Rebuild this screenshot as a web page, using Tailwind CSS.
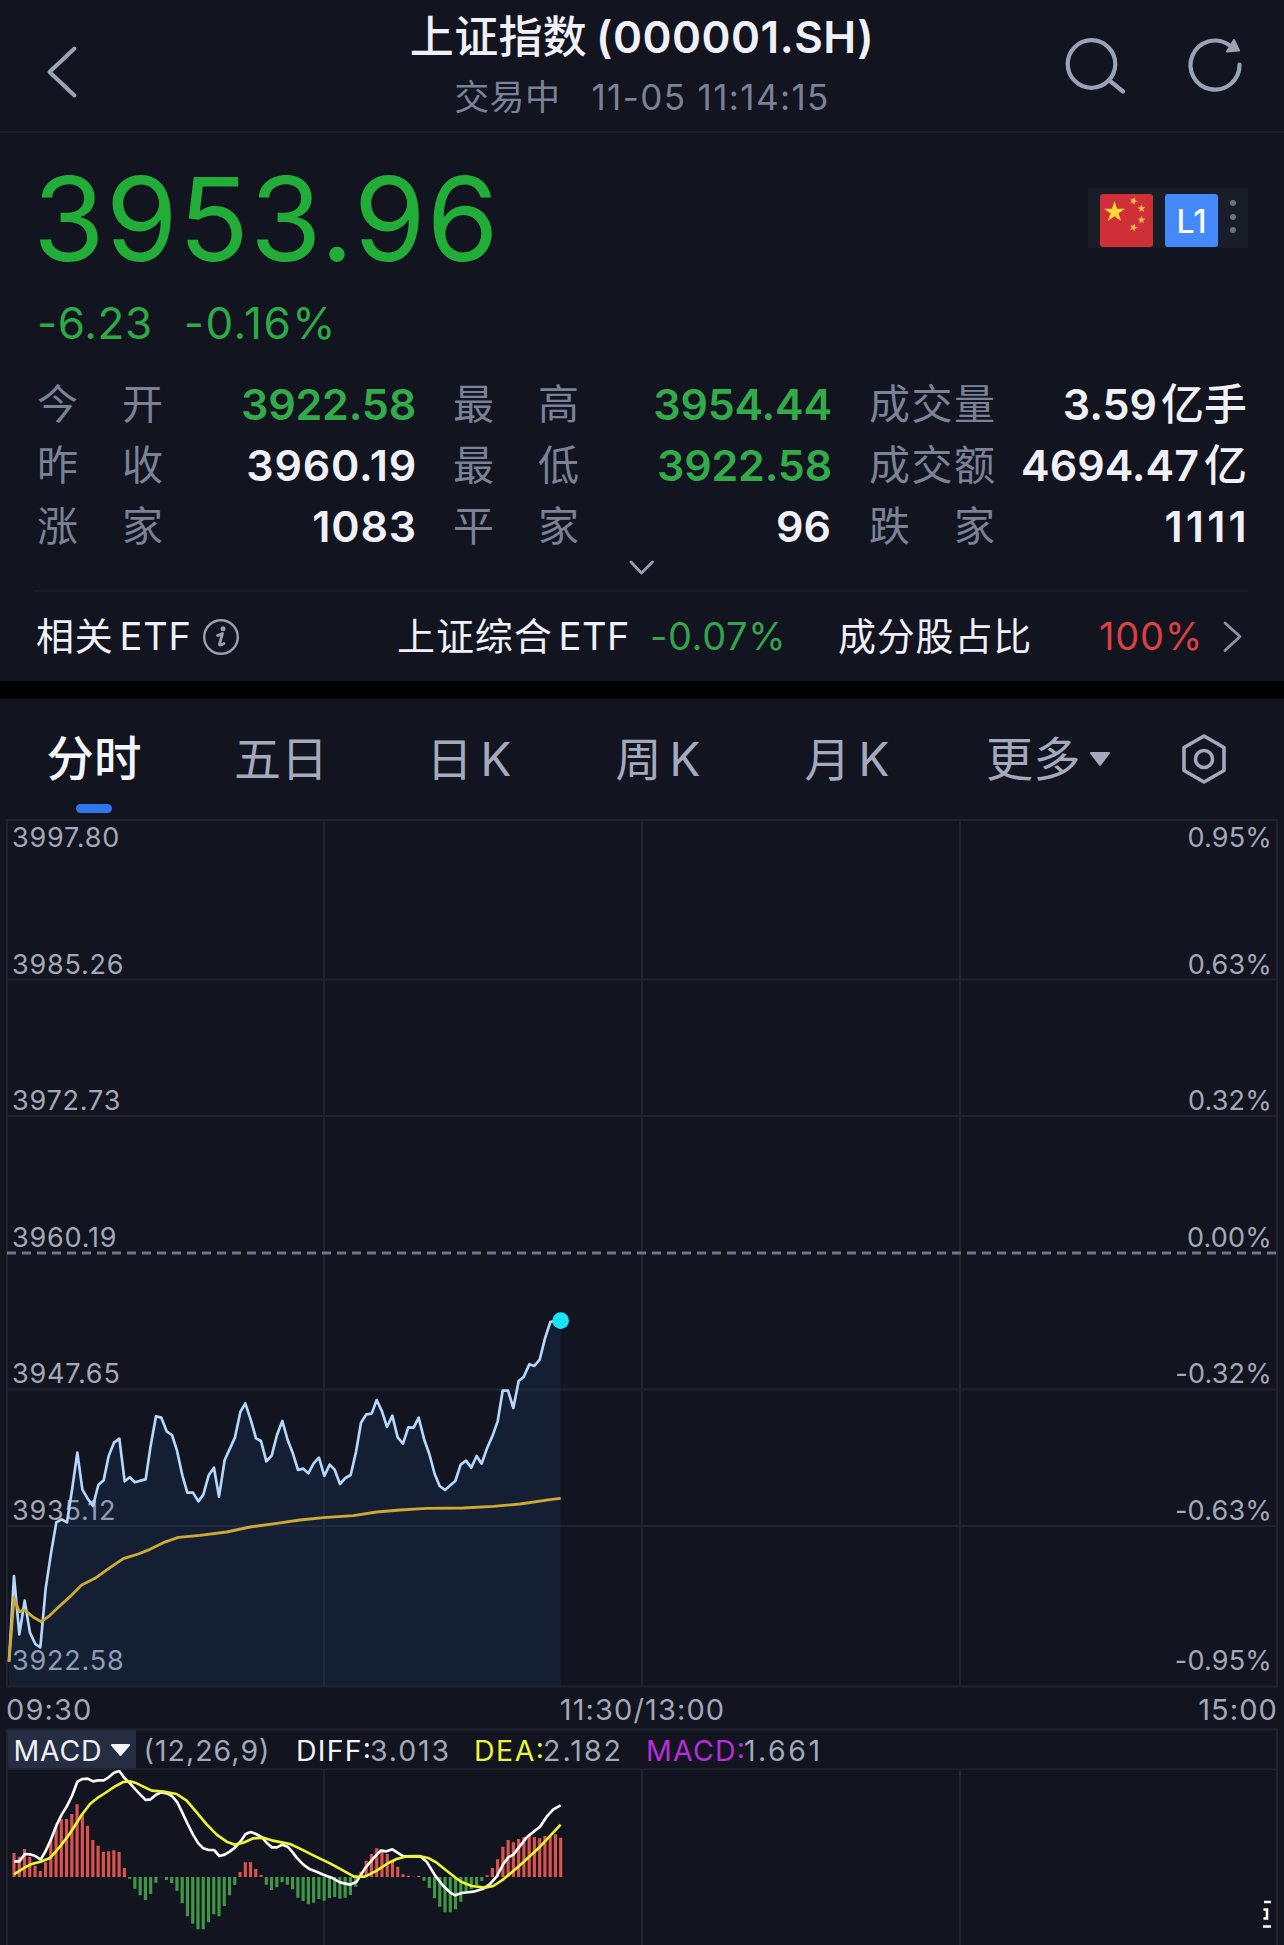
<!DOCTYPE html>
<html lang="zh-CN">
<head>
<meta charset="utf-8">
<title>上证指数 (000001.SH)</title>
<script src="https://cdn.jsdelivr.net/npm/@tailwindcss/browser@4"></script>
</head>
<body class="bg-[#12151f] font-['Inter','Noto_Sans_CJK_SC',sans-serif] text-[#f0f1f8] overflow-hidden">
<div class="w-[1284px] h-[1945px] flex flex-col overflow-hidden whitespace-nowrap">

  <header class="h-[133px] shrink-0 border-b-2 border-[#1a1d27] grid grid-cols-[1fr_auto_1fr]">
    <svg class="w-[100px] h-[131px]" viewBox="0 0 100 131" fill="none" stroke="#9ea3b8" stroke-width="4" stroke-linecap="round" stroke-linejoin="round"><path d="M74.500 48.500L49.500 72L74.500 95.500"/></svg>
    <div class="pt-[7px] flex flex-col items-center">
      <h1 class="h-[60px] leading-[60px] text-[44px] font-semibold flex gap-[9px]"><span class="font-medium tracking-[0.3px]">上证指数</span><span class="tracking-[0.5px]">(000001.SH)</span></h1>
      <p class="h-[61px] leading-[61px] text-[35px] text-[#7b8197] flex gap-[31px]"><span class="tracking-[0.4px]">交易中</span><span class="tracking-[1.4px]">11-05 11:14:15</span></p>
    </div>
    <svg class="w-[224px] h-[131px] justify-self-end" viewBox="1060 0 224 131" fill="none" stroke="#9ba1b6" stroke-width="4.200" stroke-linecap="round">
      <ellipse cx="1091.500" cy="64" rx="23.800" ry="23.800"/><path d="M1109.500 80.500L1123 91.500"/>
      <path d="M1239.500 64.500A24.500 24.500 0 1 1 1229 45"/><path fill="#9ba1b6" stroke-width="2" stroke-linejoin="round" d="M1234 40L1239 50.500L1227 51.500Z"/>
    </svg>
  </header>

  <section class="h-[548px] shrink-0 flex flex-col">
    <div class="mt-4 h-[140px] pl-[33px] pr-[36px] flex items-center justify-between">
      <span class="text-[116px] leading-[142px] tracking-[1px] text-[#22ac38]">3953.96</span>
      <div class="w-[160px] h-[60px] bg-[#191d28] flex items-start pt-[6px] pl-3 gap-3 relative -top-[1px]">
        <svg class="w-[53px] h-[53px]" viewBox="0 0 53 53"><rect width="53" height="53" rx="3" fill="#cf2f37"/>
          <path fill="#ffdc33" d="M14.500 7L17 14.700H25L18.600 19.300L21 27L14.500 22.300L8 27L10.400 19.300L4 14.700H12Z"/>
          <g fill="#f9b64a"><path transform="translate(33.500 7) rotate(20)" d="M0 -4.200L1.100 -1.400L4 -1.300L1.700 .600L2.500 3.400L0 1.800L-2.500 3.400L-1.700 .600L-4 -1.300L-1.100 -1.400Z"/><path transform="translate(41.500 14.500) rotate(-5)" d="M0 -4.200L1.100 -1.400L4 -1.300L1.700 .600L2.500 3.400L0 1.800L-2.500 3.400L-1.700 .600L-4 -1.300L-1.100 -1.400Z"/><path transform="translate(41.500 26)" d="M0 -4.200L1.100 -1.400L4 -1.300L1.700 .600L2.500 3.400L0 1.800L-2.500 3.400L-1.700 .600L-4 -1.300L-1.100 -1.400Z"/><path transform="translate(33.500 33.500) rotate(20)" d="M0 -4.200L1.100 -1.400L4 -1.300L1.700 .600L2.500 3.400L0 1.800L-2.500 3.400L-1.700 .600L-4 -1.300L-1.100 -1.400Z"/></g>
        </svg>
        <span class="w-[53px] h-[53px] rounded-[3px] bg-[#4489fa] text-white text-[32px] font-medium leading-[55px] text-center">L1</span>
        <svg class="w-[6px] h-[53px]" viewBox="0 0 6 53" fill="#6c7082"><circle cx="3" cy="9" r="3"/><circle cx="3" cy="23" r="3"/><circle cx="3" cy="36" r="3"/></svg>
      </div>
    </div>
    <div class="h-[68px] leading-[69px] pl-[37px] flex gap-[31px] text-[44px] text-[#2fa947]"><span class="tracking-[0.6px]">-6.23</span><span class="tracking-[1.5px]">-0.16%</span></div>

    <div class="mt-[17px] pl-[37px] pr-[37px] grid grid-cols-3 gap-x-[38px] text-[43px] leading-[61px] font-semibold">
      <div class="flex justify-between"><span class="w-[126px] flex justify-between text-[41px] font-normal text-[#7b8197]"><i class="not-italic">今</i><i class="not-italic">开</i></span><span class="text-[#34ab4b] -mr-px tracking-[-0.2px]">3922.58</span></div>
      <div class="flex justify-between"><span class="w-[126px] flex justify-between text-[41px] font-normal text-[#7b8197]"><i class="not-italic">最</i><i class="not-italic">高</i></span><span class="text-[#34ab4b] -mr-px tracking-[-0.2px]">3954.44</span></div>
      <div class="flex justify-between"><span class="w-[126px] flex justify-between text-[41px] font-normal text-[#7b8197]"><i class="not-italic">成</i><i class="not-italic">交</i><i class="not-italic">量</i></span><span class="flex gap-[4px]"><span>3.59</span><span class="font-medium">亿手</span></span></div>
      <div class="flex justify-between"><span class="w-[126px] flex justify-between text-[41px] font-normal text-[#7b8197]"><i class="not-italic">昨</i><i class="not-italic">收</i></span><span class="-mr-[2px] tracking-[0.8px]">3960.19</span></div>
      <div class="flex justify-between"><span class="w-[126px] flex justify-between text-[41px] font-normal text-[#7b8197]"><i class="not-italic">最</i><i class="not-italic">低</i></span><span class="text-[#34ab4b] -mr-px tracking-[-0.2px]">3922.58</span></div>
      <div class="flex justify-between"><span class="w-[126px] flex justify-between text-[41px] font-normal text-[#7b8197]"><i class="not-italic">成</i><i class="not-italic">交</i><i class="not-italic">额</i></span><span class="flex gap-[5px]"><span>4694.47</span><span class="font-medium">亿</span></span></div>
      <div class="flex justify-between"><span class="w-[126px] flex justify-between text-[41px] font-normal text-[#7b8197]"><i class="not-italic">涨</i><i class="not-italic">家</i></span><span class="-mr-[2px] tracking-[0.8px]">1083</span></div>
      <div class="flex justify-between"><span class="w-[126px] flex justify-between text-[41px] font-normal text-[#7b8197]"><i class="not-italic">平</i><i class="not-italic">家</i></span><span>96</span></div>
      <div class="flex justify-between"><span class="w-[126px] flex justify-between text-[41px] font-normal text-[#7b8197]"><i class="not-italic">跌</i><i class="not-italic">家</i></span><span class="-mr-[3px] tracking-[3.2px]">1111</span></div>
    </div>
    <svg class="w-[28px] h-[33px] mx-auto" viewBox="0 1 28 33" fill="none" stroke="#9a9fae" stroke-width="2.800" stroke-linecap="round" stroke-linejoin="round"><path d="M3 6L13.500 17L24.500 6"/></svg>
    <div class="h-[91px] ml-[34px] mr-[36px] border-t-2 border-[#1b1e29] leading-[89px] text-[38px] flex">
      <span class="w-[363px] pl-[2px] flex items-center"><span class="tracking-[0.8px]">相关</span><span class="ml-[6px] tracking-[0.8px]">ETF</span>
        <svg class="w-[38px] h-[38px] ml-[10px]" viewBox="0 0 38 38"><circle cx="19" cy="19" r="16.800" fill="none" stroke="#9a9ead" stroke-width="2.400"/><circle cx="21" cy="10.800" r="2.500" fill="#9a9ead"/><path d="M15.500 17.500Q18.500 16.800 20.500 15.500L17.500 26Q17 28.500 22 25.500" fill="none" stroke="#9a9ead" stroke-width="2.800" stroke-linecap="round" stroke-linejoin="round"/></svg>
      </span>
      <span class="w-[441px] flex"><span class="tracking-[0.9px]">上证综合</span><span class="ml-[6px] tracking-[0.5px]">ETF</span><span class="ml-[20px] tracking-[0.6px] text-[#35a24d]">-0.07%</span></span>
      <span class="tracking-[0.8px]">成分股占比</span>
      <span class="ml-auto tracking-[0.8px] text-[#dc4142]">100%</span>
      <svg class="w-[24px] h-[89px] ml-[18px] mr-[3px]" viewBox="0 0 24 89" fill="none" stroke="#8f94a5" stroke-width="2.800" stroke-linecap="round" stroke-linejoin="round"><path d="M4 31L19 44.500L4 58.500"/></svg>
    </div>
  </section>

  <div class="h-[18px] shrink-0 bg-black"></div>

  <nav class="h-[120px] shrink-0 relative flex items-center leading-[118px] text-[46px] text-[#a5a9bd]">
    <span class="w-[188px] text-center text-[47.500px] font-medium text-[#f4f5fb]">分时</span>
    <span class="w-[186px] text-center text-[47px]">五日</span>
    <span class="w-[190px] flex justify-center gap-[8px]"><i class="not-italic">日</i><i class="not-italic">K</i></span>
    <span class="w-[188px] flex justify-center gap-[8px]"><i class="not-italic">周</i><i class="not-italic">K</i></span>
    <span class="w-[190px] flex justify-center gap-[8px]"><i class="not-italic">月</i><i class="not-italic">K</i></span>
    <span class="ml-[44px] text-[47px] tracking-[0.5px]">更多</span>
    <svg class="w-[22px] h-[16px] ml-[8px]" viewBox="0 0 22 16"><path d="M2 2H20L11 14Z" fill="#a5a9bd" stroke="#a5a9bd" stroke-width="2" stroke-linejoin="round"/></svg>
    <svg class="w-[48px] h-[52px] ml-[69px]" viewBox="0 0 48 52" fill="none" stroke="#a3a8bd" stroke-width="3.600" stroke-linejoin="round"><path d="M24 3L44 14.500V37.500L24 49L4 37.500V14.500Z"/><circle cx="24" cy="26" r="8.500"/></svg>
    <span class="absolute left-[76px] top-[105px] w-[36px] h-[9px] rounded-full bg-[#2f75ec]"></span>
  </nav>

  <svg class="block w-[1284px] h-[951px] shrink-0" viewBox="0 819 1284 951" fill="#a3a7b8" font-size="27">
    <g stroke="#20232e" stroke-width="2" fill="none">
      <path d="M7 820H1277V1686.500H7ZM7 979.500H1277M7 1116H1277M7 1389.500H1277M7 1526H1277M324 820V1686M642 820V1686M960 820V1686"/>
      <path d="M7 1729.500H1277V1770M7 1729.500V1770"/>
    </g>
    <path d="M7 1253H1277" stroke="#70748a" stroke-width="2.800" stroke-dasharray="9 6"/>
    <g class="tracking-[0.8px]">
      <text x="12" y="847">3997.80</text><text x="12" y="974">3985.26</text><text x="12" y="1110">3972.73</text><text x="12" y="1247">3960.19</text><text x="12" y="1383">3947.65</text><text x="12" y="1520">3935.12</text><text x="12" y="1670">3922.58</text>
    </g>
    <g text-anchor="end" class="tracking-[0.2px]">
      <text x="1272" y="847">0.95%</text><text x="1272" y="974">0.63%</text><text x="1272" y="1110">0.32%</text><text x="1272" y="1247">0.00%</text><text x="1272" y="1383">-0.32%</text><text x="1272" y="1520">-0.63%</text><text x="1272" y="1670">-0.95%</text>
    </g>
    <g transform="translate(0 1300) scale(.333333)" fill="none" stroke-linejoin="round">
      <path id="area" fill="#275ca7" fill-opacity=".15"/>
      <polyline id="price" stroke="#b4d8fc" stroke-width="8" points="27,1085 42,828 58,1003 74,902 90,998 106,1032 121,1042 137,866 153,760 169,667 185,658 201,667 216,570 232,458 247,568 263,596 279,618 295,555 311,541 326,468 342,428 358,416 374,544 389,532 405,547 421,542 437,538 452,437 468,349 484,353 500,394 516,405 531,452 547,526 562,578 579,578 595,604 610,584 626,526 642,503 657,590 674,480 690,445 705,412 721,336 736,310 753,362 768,415 783,423 799,484 815,467 831,405 847,363 863,420 878,458 894,510 910,506 925,520 941,490 957,473 973,528 989,494 1004,509 1020,552 1036,534 1052,525 1068,456 1083,368 1099,343 1115,341 1130,300 1146,334 1161,381 1177,347 1193,412 1209,431 1225,382 1241,383 1256,353 1273,420 1288,462 1304,522 1319,558 1335,570 1351,556 1366,543 1382,494 1398,482 1414,503 1430,468 1445,491 1461,445 1477,409 1493,364 1508,272 1524,272 1540,324 1556,243 1571,231 1588,193 1603,198 1619,179 1635,115 1651,66 1667,62 1682,62"/>
      <polyline stroke="#cdaa35" stroke-width="8.500" points="27,1085 42,893 58,935 74,930 98,950 124,965 145,950 175,922 210,890 245,855 285,835 330,803 370,776 415,762 450,748 490,728 535,712 600,706 680,696 750,681 830,670 900,660 970,653 1060,647 1130,636 1200,630 1280,625 1390,624 1480,619 1560,612 1650,599 1682,595"/>
      <circle cx="1682" cy="62" r="25" fill="#19e3fb"/>
    </g>
    <g font-size="29" class="tracking-[1.1px]">
      <text x="6" y="1720">09:30</text><text x="642.500" y="1720" text-anchor="middle">11:30/13:00</text><text x="1278" y="1720" text-anchor="end">15:00</text>
    </g>
    <rect x="8" y="1730" width="128" height="40" fill="#242d41"/>
    <path d="M112 1745H129L120.500 1755Z" fill="#f4f5fb" stroke="#f4f5fb" stroke-width="2" stroke-linejoin="round"/>
    <g font-size="28.500">
      <text x="13.500" y="1761" fill="#eef0f8" textLength="88">MACD</text>
      <text x="143.500" y="1761" textLength="126">(12,26,9)</text>
      <text x="296" y="1761" textLength="75" fill="#f4f5fb">DIFF:</text><text x="370" y="1761" textLength="79">3.013</text>
      <text x="474" y="1761" textLength="70" fill="#e9f53a">DEA:</text><text x="543" y="1761" textLength="78">2.182</text>
      <text x="646" y="1761" textLength="99" fill="#b62edb">MACD:</text><text x="744" y="1761" textLength="76">1.661</text>
    </g>
    <path d="M7 1769.500H1277" stroke="#20232e" stroke-width="2"/>
  </svg>

  <svg class="block w-[1284px] h-[175px] shrink-0" viewBox="0 1770 1284 175" fill="none">
    <path d="M7 1770V1945M324 1770V1945M642 1770V1945M960 1770V1945M1277 1770V1945" stroke="#20232e" stroke-width="2"/>
    <g transform="translate(0 1690) scale(.333333)" stroke-linejoin="round">
      <path id="up" stroke="#d9544d" stroke-width="9.500"/>
      <path id="down" stroke="#3f9745" stroke-width="9.500"/>
      <polyline stroke="#fafafa" stroke-width="8" points="42,514 58,514 75,492 90,493 106,498 122,509 137,483 153,448 169,407 185,374 200,350 216,318 232,275 247,267 263,266 279,274 295,271 311,271 326,262 342,248 358,243 374,265 390,280 406,298 421,314 437,330 452,328 468,314 484,307 500,310 516,318 532,337 547,368 563,402 579,434 595,460 610,475 626,480 642,480 658,498 674,494 690,484 705,473 721,455 737,432 752,426 768,432 784,441 800,458 815,472 831,472 847,464 863,470 878,487 890,503 910,524 930,538 950,545 970,554 995,563 1020,577 1050,584 1070,575 1095,535 1120,505 1142,482 1160,484 1177,478 1210,499 1260,498 1280,515 1305,556 1330,588 1350,607 1365,616 1385,609 1420,605 1450,596 1470,582 1490,560 1510,522 1525,502 1540,494 1580,442 1620,410 1640,380 1660,358 1682,346"/>
      <polyline stroke="#ecf435" stroke-width="8" points="42,553 75,532 95,522 122,515 150,504 180,470 210,430 245,375 270,342 295,322 320,306 345,289 370,276 390,274 410,280 455,302 490,305 530,312 560,332 590,367 620,403 650,434 680,455 705,464 730,458 760,445 790,443 815,451 845,457 870,462 900,476 940,496 990,520 1030,542 1062,560 1095,560 1130,542 1165,519 1190,507 1215,500 1260,499 1285,504 1310,518 1340,542 1365,562 1385,576 1415,588 1455,593 1480,588 1510,568 1560,526 1620,470 1682,404"/>
    </g>
    <path d="M1264 1902H1271M1263.500 1909.500H1267V1918.500H1263.500M1263 1926.500H1271" stroke="#fff" stroke-width="2.600"/>
  </svg>
</div>
<script>
  // Fill under the price line
  const pts = document.getElementById('price').getAttribute('points');
  document.getElementById('area').setAttribute('d', 'M' + pts.replace(/ /g, 'L') + 'V1158H27Z');

  // MACD histogram: one bar end per minute, measured against the zero line
  const zero = 561;
  const ends = [489,500,477,501,527,543,517,450,410,388,387,372,343,375,407,450,467,486,484,481,486,534,566,596,616,630,612,578,562,570,579,602,640,679,701,718,718,697,673,679,648,616,585,546,517,517,537,555,584,600,592,577,584,598,623,633,643,638,627,632,624,621,626,623,615,590,545,512,492,475,478,492,510,530,553,557,560,557,572,594,625,650,667,667,658,635,603,597,585,573,556,534,508,470,450,457,447,441,437,441,445,438,438,433,443];
  let up = '', down = '';
  ends.forEach((y, i) => {
    const seg = 'M' + (42 + i * 15.77).toFixed(1) + ' ' + zero + 'V' + y;
    if (y < zero) up += seg; else down += seg;
  });
  document.getElementById('up').setAttribute('d', up);
  document.getElementById('down').setAttribute('d', down);
</script>
</body>
</html>
